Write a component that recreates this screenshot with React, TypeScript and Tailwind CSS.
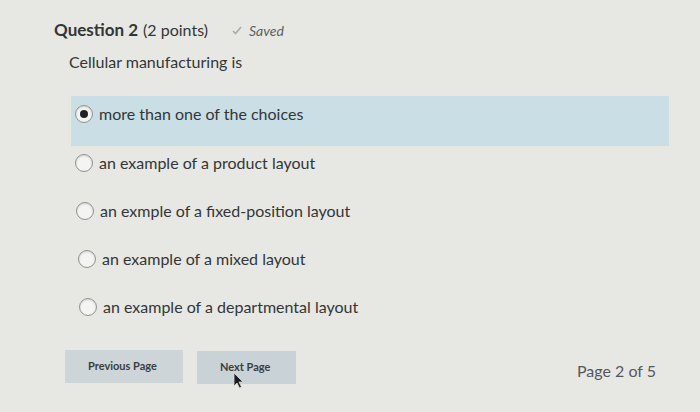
import React from 'react';

const options = [
  { label: 'more than one of the choices', selected: true, pl: 'pl-[4px]' },
  { label: 'an example of a product layout', selected: false, pl: 'pl-[4px]' },
  { label: 'an exmple of a fixed-position layout', selected: false, pl: 'pl-[5px]' },
  { label: 'an example of a mixed layout', selected: false, pl: 'pl-[7px]' },
  { label: 'an example of a departmental layout', selected: false, pl: 'pl-[8px]' },
];

function Radio({ selected }: { selected: boolean }) {
  return (
    <span className="flex h-[18px] w-[18px] shrink-0 items-center justify-center rounded-full border border-[#8f9391] bg-[#f4f5f2] shadow-[inset_0_1px_2px_rgba(0,0,0,0.15)]">
      {selected && <span className="h-[8px] w-[8px] rounded-full bg-[#1f2224]" />}
    </span>
  );
}

export default function App() {
  return (
    <div
      className="relative h-[412px] w-[700px] overflow-hidden bg-[#e7e8e3] text-[#333638]"
      style={{ fontFamily: 'Lato, "Open Sans", sans-serif' }}
    >
      <div className="pl-[54px] pt-[18px]">
        {/* HEADER */}
        <div className="flex h-[24px] items-center">
          <span className="text-[17px] font-bold">Question 2</span>
          <span className="ml-[5px] text-[16px]">(2 points)</span>
          <span className="ml-[24px] flex items-center gap-[7px] text-[14px] italic text-[#5b5e5f]">
            <svg width="10" height="9" viewBox="0 0 10 9" fill="none">
              <path d="M1 5l2.5 2.5L9 1" stroke="#a8abab" strokeWidth="1.6" />
            </svg>
            Saved
          </span>
        </div>

        {/* QUESTION */}
        <div className="ml-[15px] mt-[8px] h-[24px] text-[16px] leading-[24px]">Cellular manufacturing is</div>

        {/* OPTIONS */}
        <div className="ml-[17px] mr-[31px] mt-[22px]">
          {options.map((o) => (
            <div
              key={o.label}
              className={`flex items-start gap-[6px] ${o.pl} ${
                o.selected ? 'h-[50px] bg-[#c9dfe5] pt-[6px]' : 'h-[48px] pt-[5px]'
              }`}
            >
              <span className="flex h-[24px] items-center">
                <Radio selected={o.selected} />
              </span>
              <span className="text-[16px] leading-[24px]">{o.label}</span>
            </div>
          ))}
        </div>

        {/* FOOTER */}
        <div className="mt-[11px] flex items-center pl-[11px] pr-[44px]">
          <button className="h-[33px] w-[118px] bg-[#cdd5d8] pl-[23px] text-left text-[11px] font-bold text-[#3b3e40]">
            Previous Page
          </button>
          <button className="ml-[14px] mt-[2px] h-[33px] w-[99px] bg-[#c9d2d6] pl-[23px] text-left text-[11px] font-bold text-[#3b3e40]">
            Next Page
          </button>
          <span className="ml-auto mt-[8px] text-[16px] text-[#55585a]">Page 2 of 5</span>
        </div>
      </div>

      {/* CURSOR */}
      <svg className="absolute left-[233px] top-[372px]" width="12" height="18" viewBox="0 0 12 18">
        <path d="M1 1v13l3-3 2.5 5 2-1-2.5-5H10z" fill="#1c1c1c" stroke="#d8d8d8" strokeWidth="0.8" />
      </svg>
    </div>
  );
}
